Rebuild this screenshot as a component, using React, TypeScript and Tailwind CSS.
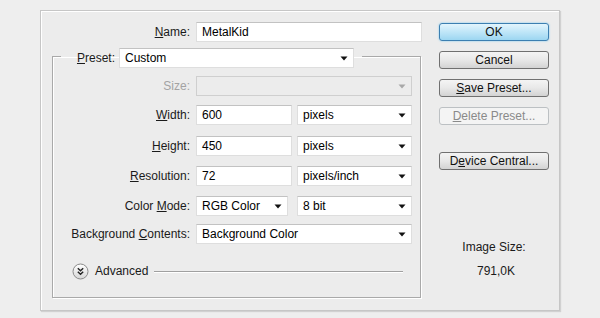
import React from 'react';

const Arrow = ({ dim }: { dim?: boolean }) => (
  <svg width="8" height="5" viewBox="0 0 8 5" className="shrink-0">
    <path d="M0.5 0.5 H7.5 L4 4.5 Z" fill={dim ? '#a8a8a8' : '#111'} />
  </svg>
);

const Field = ({ value, w }: { value: string; w: string }) => (
  <div className={`${w} h-[20px] bg-white border border-[#dedede] border-t-[#c2c2c2] flex items-center pl-[5px] text-[12px]`}>
    {value}
  </div>
);

const Select = ({ value, w, disabled }: { value?: string; w: string; disabled?: boolean }) => (
  <div
    className={`${w} h-[20px] border flex items-center justify-between pl-[5px] pr-[5px] text-[12px] ${
      disabled ? 'bg-[#ececec] border-[#cfcfcf]' : 'bg-white border-[#dedede] border-t-[#c2c2c2]'
    }`}
  >
    <span>{value}</span>
    <Arrow dim={disabled} />
  </div>
);

const Label = ({ children, dim }: { children: React.ReactNode; dim?: boolean }) => (
  <div className={`w-[137px] text-right text-[12px] pr-[6px] box-content ${dim ? 'text-[#a3a3a3]' : 'text-[#1a1a1a]'}`}>
    {children}
  </div>
);

const Btn = ({ children, kind }: { children: React.ReactNode; kind?: 'ok' | 'off' }) => {
  let cls = 'border-[#707070] bg-gradient-to-b from-[#f4f4f4] via-[#e8e8e8] to-[#d3d3d3] text-[#111]';
  if (kind === 'ok')
    cls = 'border-[#3c7fb1] bg-gradient-to-b from-[#e3f5fd] via-[#bfe6f8] to-[#9cd6f1] text-[#111] shadow-[0_0_2px_#6fc6f0]';
  if (kind === 'off') cls = 'border-[#bcc0c3] bg-[#f4f4f4] text-[#8a8a8a]';
  return (
    <div className={`w-[110px] h-[18px] rounded-[3px] border flex items-center justify-center text-[12px] ${cls}`}>
      {children}
    </div>
  );
};

export default function App() {
  return (
    <div
      className="w-[600px] h-[318px] bg-[#eeeeee] pt-[10px] pl-[40px]"
      style={{ fontFamily: '"Liberation Sans", Arial, sans-serif' }}
    >
      <div className="w-[520px] h-[301px] bg-[#ececec] border border-[#c6c6c6] shadow-[inset_1px_1px_0_#ffffff,1px_1px_1px_rgba(0,0,0,0.12)] flex">
        {/* left: form */}
        <div className="w-[382px] pt-[11px]">
          <div className="flex items-center">
            <div className="w-[149px] text-right text-[12px] text-[#1a1a1a]">
              <u>N</u>ame:
            </div>
            <div className="ml-[6px]">
              <Field value="MetalKid" w="w-[226px]" />
            </div>
          </div>

          <fieldset className="ml-[11px] mt-[6px] w-[369px] h-[250px] border border-[#a9a9a9] shadow-[1px_1px_0_#ffffff,inset_1px_1px_0_#ffffff]">
            <legend className="ml-[8px] h-[16px] flex items-start">
              <div className="w-[54px] h-[20px] flex items-center justify-end text-[12px] text-[#1a1a1a]">
                <span>
                  <u>P</u>reset:
                </span>
              </div>
              <div className="ml-[4px] mr-[8px]">
                <Select value="Custom" w="w-[235px]" />
              </div>
            </legend>

            <div className="flex flex-col">
              <div className="flex items-center mt-[12px]">
                <Label dim>Size:</Label>
                <Select w="w-[216px]" disabled />
              </div>
              <div className="flex items-center mt-[9px]">
                <Label>
                  <u>W</u>idth:
                </Label>
                <Field value="600" w="w-[96px]" />
                <div className="ml-[5px]">
                  <Select value="pixels" w="w-[115px]" />
                </div>
              </div>
              <div className="flex items-center mt-[11px]">
                <Label>
                  <u>H</u>eight:
                </Label>
                <Field value="450" w="w-[96px]" />
                <div className="ml-[5px]">
                  <Select value="pixels" w="w-[115px]" />
                </div>
              </div>
              <div className="flex items-center mt-[10px]">
                <Label>
                  <u>R</u>esolution:
                </Label>
                <Field value="72" w="w-[96px]" />
                <div className="ml-[5px]">
                  <Select value="pixels/inch" w="w-[115px]" />
                </div>
              </div>
              <div className="flex items-center mt-[10px]">
                <Label>
                  Color <u>M</u>ode:
                </Label>
                <Select value="RGB Color" w="w-[92px]" />
                <div className="ml-[9px]">
                  <Select value="8 bit" w="w-[115px]" />
                </div>
              </div>
              <div className="flex items-center mt-[8px]">
                <Label>
                  Background <u>C</u>ontents:
                </Label>
                <Select value="Background Color" w="w-[216px]" />
              </div>

              <div className="flex items-center mt-[19px] ml-[19px] mr-[17px] h-[16px]">
                <svg width="17" height="17" viewBox="0 0 17 17" className="shrink-0">
                  <defs>
                    <linearGradient id="adv" x1="0" y1="0" x2="0" y2="1">
                      <stop offset="0" stopColor="#ffffff" />
                      <stop offset="1" stopColor="#d6d6d6" />
                    </linearGradient>
                  </defs>
                  <circle cx="8.5" cy="8.5" r="7.5" fill="url(#adv)" stroke="#8a8a8a" />
                  <path d="M5.8 5.2 L8.5 7.8 L11.2 5.2 M5.8 8.7 L8.5 11.3 L11.2 8.7" fill="none" stroke="#222" strokeWidth="1.4" />
                </svg>
                <span className="ml-[6px] text-[12px] text-[#1a1a1a]">Advanced</span>
                <div className="ml-[6px] flex-1 h-[1px] bg-[#a0a0a0] shadow-[0_1px_0_#ffffff]" />
              </div>
            </div>
          </fieldset>
        </div>

        {/* right: buttons */}
        <div className="ml-[16px] pt-[12px] flex flex-col w-[110px]">
          <Btn kind="ok">OK</Btn>
          <div className="mt-[10px]">
            <Btn>Cancel</Btn>
          </div>
          <div className="mt-[10px]">
            <Btn>
              <span>
                <u>S</u>ave Preset...
              </span>
            </Btn>
          </div>
          <div className="mt-[10px]">
            <Btn kind="off">
              <span>
                <u>D</u>elete Preset...
              </span>
            </Btn>
          </div>
          <div className="mt-[27px]">
            <Btn>
              <span>
                D<u>e</u>vice Central...
              </span>
            </Btn>
          </div>
          <div className="mt-[70px] text-center text-[12px] text-[#1a1a1a] leading-[14px]">Image Size:</div>
          <div className="mt-[10px] text-center text-[12px] text-[#1a1a1a] leading-[14px] pl-[4px]">791,0K</div>
        </div>
      </div>
    </div>
  );
}
